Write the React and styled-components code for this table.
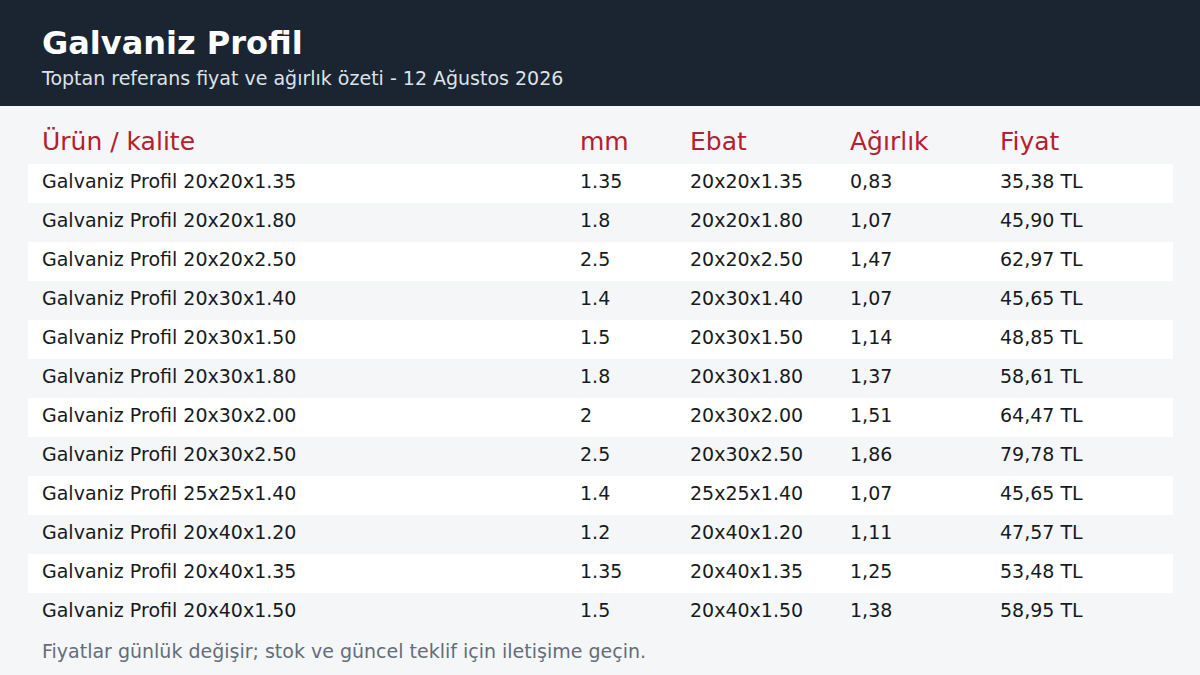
import React from "react";
import styled, { createGlobalStyle } from "styled-components";

const Global = createGlobalStyle`
  html, body { margin: 0; padding: 0; }
  body { background: #f4f6f8; font-family: "DejaVu Sans", "Liberation Sans", sans-serif; }
`;

const Page = styled.div`
  width: 1200px;
  height: 675px;
  background: #f4f6f8;
  overflow: hidden;
`;

const Header = styled.header`
  height: 106px;
  box-sizing: border-box;
  background: #1b2532;
  padding: 24px 42px 0;
  color: #fff;
`;

const Title = styled.h1`
  margin: 0;
  font-size: 32px;
  line-height: 38px;
  font-weight: bold;
`;

const Subtitle = styled.p`
  margin: 4px 0 0;
  font-size: 19px;
  line-height: 25px;
  color: #dde2e8;
`;

const Body = styled.main`
  padding: 14px 27px 0 28px;
`;

const Table = styled.table`
  width: 1145px;
  border-collapse: collapse;
  table-layout: fixed;
`;

const Th = styled.th`
  box-sizing: border-box;
  text-align: left;
  font-weight: normal;
  font-size: 25px;
  line-height: 30px;
  color: #b3202f;
  padding: 7px 14px 7px;
  width: ${(p) => p.$w}px;
`;

const Row = styled.tr`
  background: ${(p) => (p.$alt ? "#f4f6f8" : "#ffffff")};
`;

const Td = styled.td`
  font-size: 19px;
  line-height: 23px;
  color: #161b22;
  padding: 6px 14px 10px;
  white-space: nowrap;
`;

const Note = styled.p`
  margin: 7px 0 0 14px;
  font-size: 19px;
  line-height: 24px;
  color: #646d78;
`;

const rows = [
  ["Galvaniz Profil 20x20x1.35", "1.35", "20x20x1.35", "0,83", "35,38 TL"],
  ["Galvaniz Profil 20x20x1.80", "1.8", "20x20x1.80", "1,07", "45,90 TL"],
  ["Galvaniz Profil 20x20x2.50", "2.5", "20x20x2.50", "1,47", "62,97 TL"],
  ["Galvaniz Profil 20x30x1.40", "1.4", "20x30x1.40", "1,07", "45,65 TL"],
  ["Galvaniz Profil 20x30x1.50", "1.5", "20x30x1.50", "1,14", "48,85 TL"],
  ["Galvaniz Profil 20x30x1.80", "1.8", "20x30x1.80", "1,37", "58,61 TL"],
  ["Galvaniz Profil 20x30x2.00", "2", "20x30x2.00", "1,51", "64,47 TL"],
  ["Galvaniz Profil 20x30x2.50", "2.5", "20x30x2.50", "1,86", "79,78 TL"],
  ["Galvaniz Profil 25x25x1.40", "1.4", "25x25x1.40", "1,07", "45,65 TL"],
  ["Galvaniz Profil 20x40x1.20", "1.2", "20x40x1.20", "1,11", "47,57 TL"],
  ["Galvaniz Profil 20x40x1.35", "1.35", "20x40x1.35", "1,25", "53,48 TL"],
  ["Galvaniz Profil 20x40x1.50", "1.5", "20x40x1.50", "1,38", "58,95 TL"],
];

const cols = [
  ["Ürün / kalite", 538],
  ["mm", 110],
  ["Ebat", 160],
  ["Ağırlık", 150],
  ["Fiyat", 187],
];

export default function App() {
  return (
    <Page>
      <Global />
      <Header>
        <Title>Galvaniz Profil</Title>
        <Subtitle>Toptan referans fiyat ve ağırlık özeti - 12 Ağustos 2026</Subtitle>
      </Header>
      <Body>
        <Table>
          <thead>
            <tr>
              {cols.map(([c, w]) => (
                <Th key={c} $w={w}>{c}</Th>
              ))}
            </tr>
          </thead>
          <tbody>
            {rows.map((r, i) => (
              <Row key={i} $alt={i % 2 === 1}>
                {r.map((v, j) => (
                  <Td key={j}>{v}</Td>
                ))}
              </Row>
            ))}
          </tbody>
        </Table>
        <Note>Fiyatlar günlük değişir; stok ve güncel teklif için iletişime geçin.</Note>
      </Body>
    </Page>
  );
}
